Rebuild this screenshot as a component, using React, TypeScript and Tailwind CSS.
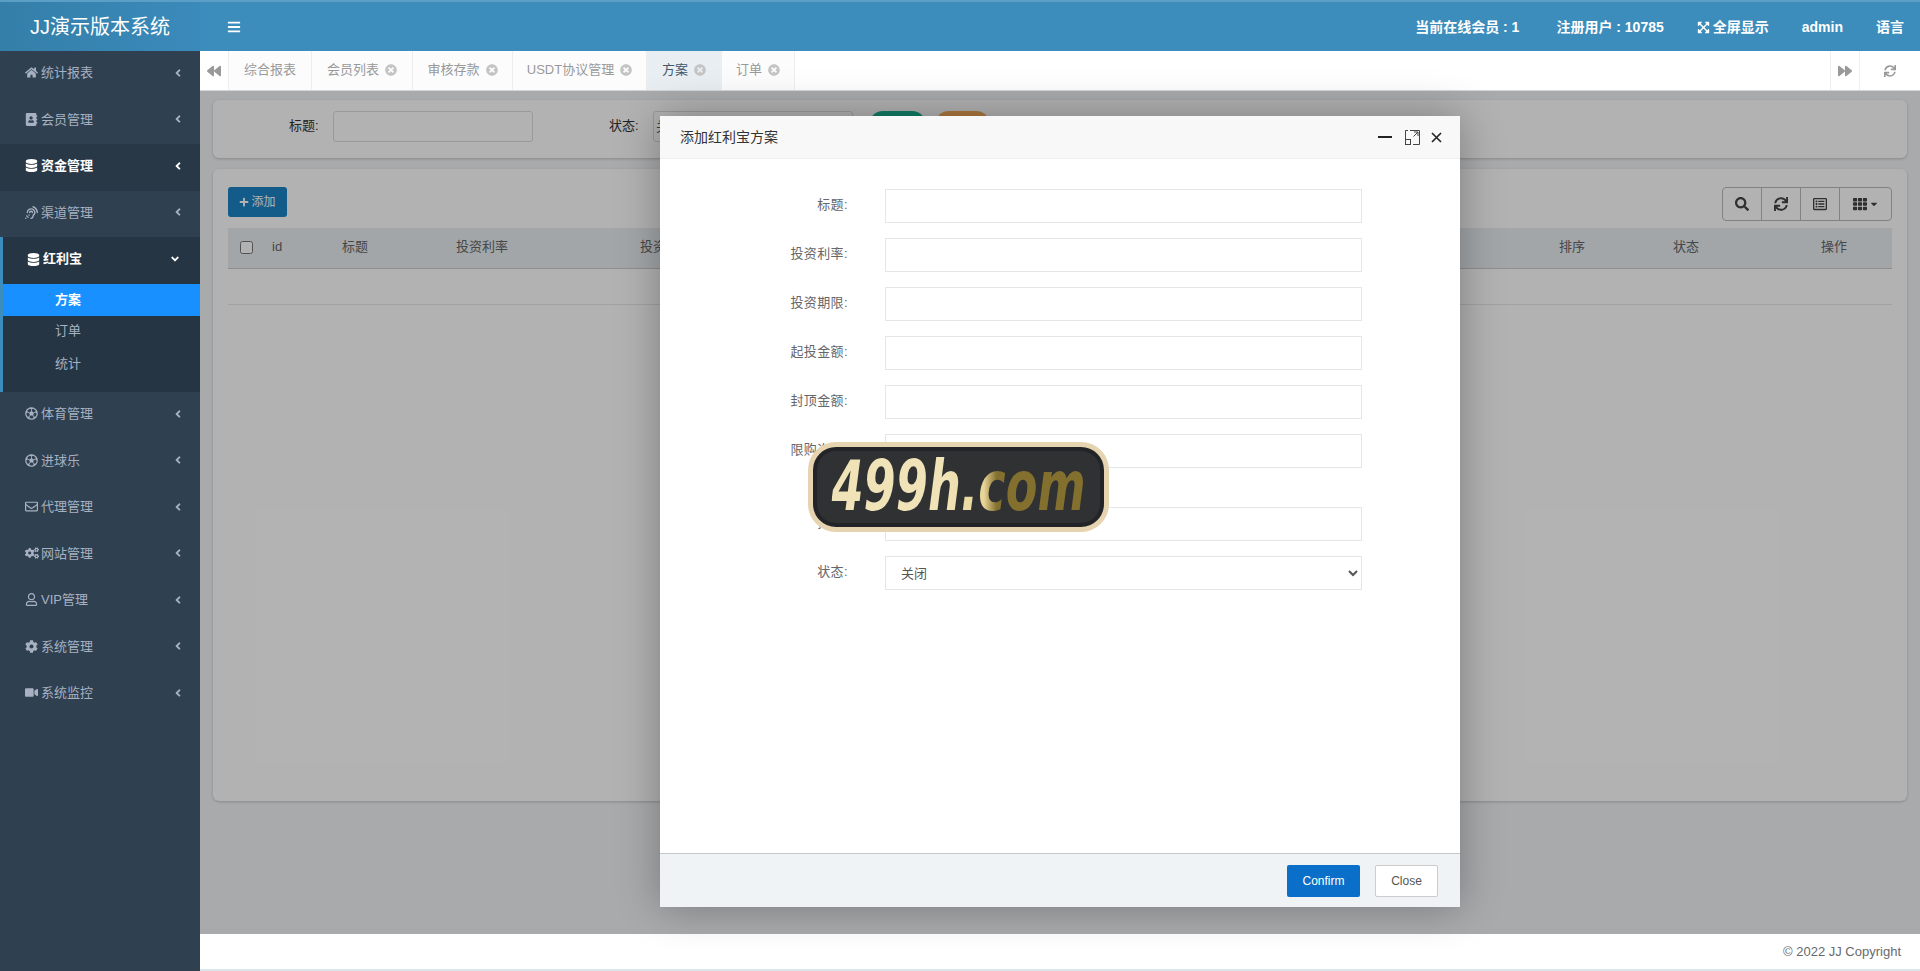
import React from 'react';
import {
  FaHome, FaAddressBook, FaDatabase, FaAssistiveListeningSystems, FaRegFutbol, FaRegEnvelope,
  FaCogs, FaRegUser, FaCog, FaVideo, FaBars, FaAngleLeft, FaAngleDown, FaBackward, FaForward, FaSync,
  FaTimesCircle, FaSearch, FaRegListAlt, FaTh, FaCaretDown, FaPlus, FaExpandArrowsAlt,
} from 'react-icons/fa';

const FONT = '[font-family:"Liberation_Sans","Noto_Sans_CJK_SC",sans-serif]';

type MenuItem = { label: string; icon: React.ReactNode; active?: boolean };

const topItems: MenuItem[] = [
  { label: '统计报表', icon: <FaHome size={13} /> },
  { label: '会员管理', icon: <FaAddressBook size={13} /> },
  { label: '资金管理', icon: <FaDatabase size={13} />, active: true },
  { label: '渠道管理', icon: <FaAssistiveListeningSystems size={13} /> },
];

const bottomItems: MenuItem[] = [
  { label: '体育管理', icon: <FaRegFutbol size={13} /> },
  { label: '进球乐', icon: <FaRegFutbol size={13} /> },
  { label: '代理管理', icon: <FaRegEnvelope size={13} /> },
  { label: '网站管理', icon: <FaCogs size={14} /> },
  { label: 'VIP管理', icon: <FaRegUser size={13} /> },
  { label: '系统管理', icon: <FaCog size={13} /> },
  { label: '系统监控', icon: <FaVideo size={13} /> },
];

const tabs = [
  { label: '综合报表', close: false, w: 'w-[83px]' },
  { label: '会员列表', close: true, w: 'w-[101px]' },
  { label: '审核存款', close: true, w: 'w-[100px]' },
  { label: 'USDT协议管理', close: true, w: 'w-[134px]' },
  { label: '方案', close: true, w: 'w-[75px]', active: true },
  { label: '订单', close: true, w: 'w-[73px]' },
];

function SideItem({ item }: { item: MenuItem }) {
  return (
    <div className={`flex h-[46.5px] items-center pb-[3px] pl-[25px] pr-[16px] text-[13px] ${item.active ? 'bg-[#293846] font-bold text-white' : 'text-[#a7b1c2]'}`}>
      <span className="flex w-[16px] shrink-0">{item.icon}</span>
      <span className="flex-1">{item.label}</span>
      <FaAngleLeft size={12} />
    </div>
  );
}

function Sidebar() {
  return (
    <aside className="flex w-[200px] shrink-0 flex-col bg-[#2f4050]">
      <div className="flex h-[51px] items-center justify-center border-t-2 border-[#5c9fc6] bg-gradient-to-r from-[#347fa9] to-[#3a8abb] text-[20px] text-white">
        JJ演示版本系统
      </div>
      {topItems.map((item) => <SideItem key={item.label} item={item} />)}
      <div className="h-[155px] border-l-[3px] border-[#3c8dbc] bg-[#263544]">
        <div className="flex h-[47px] items-center pb-[3px] pl-[24px] pr-[19px] text-[13px] font-bold text-white">
          <span className="flex w-[16px] shrink-0"><FaDatabase size={13} /></span>
          <span className="flex-1">红利宝</span>
          <FaAngleDown size={12} />
        </div>
        <div className="flex h-[32px] items-center bg-[#1890ff] pl-[52px] text-[13px] font-bold text-white">方案</div>
        <div className="flex h-[33px] items-center pb-[3px] pl-[52px] text-[13px] text-[#a7b1c2]">订单</div>
        <div className="flex h-[33px] items-center pb-[3px] pl-[52px] text-[13px] text-[#a7b1c2]">统计</div>
      </div>
      {bottomItems.map((item) => <SideItem key={item.label} item={item} />)}
    </aside>
  );
}

function TopBar() {
  return (
    <header className="flex h-[51px] items-center border-t-2 border-[#5c9fc6] bg-[#3c8dbc] pl-[27px] text-white">
      <FaBars size={14} />
      <div className="ml-auto flex items-center pt-[2px] text-[14px] font-bold">
        <span>当前在线会员 : 1</span>
        <span className="ml-[37px]">注册用户 : 10785</span>
        <span className="ml-[33px] flex items-center gap-[3px]"><FaExpandArrowsAlt size={13} />全屏显示</span>
        <span className="ml-[33px]">admin</span>
        <span className="ml-[33px] mr-[16px]">语言</span>
      </div>
    </header>
  );
}

function TabBar() {
  return (
    <div className="flex h-[40px] items-stretch border-b border-[#d6d6d6] bg-white text-[13px] text-[#999]">
      <div className="flex w-[29px] items-center justify-center border-r border-[#eee]"><FaBackward size={14} /></div>
      {tabs.map((t) => (
        <div key={t.label} className={`flex ${t.w} items-center justify-center gap-[6px] border-r border-[#eee] pb-[2px] ${t.active ? 'bg-[#e9eef3] text-[#44586b]' : 'bg-[#fcfcfc]'}`}>
          {t.label}
          {t.close && <FaTimesCircle size={12} className="text-[#c4c4c4]" />}
        </div>
      ))}
      <div className="ml-auto flex w-[30px] items-center justify-center border-x border-[#eee]"><FaForward size={14} /></div>
      <div className="flex w-[60px] items-center justify-center"><FaSync size={12} /></div>
    </div>
  );
}

function Page() {
  return (
    <div className="flex h-full flex-col gap-[11px] px-[13px] pt-[9px] text-[13px]">
      <div className="flex h-[58px] items-start rounded-[6px] bg-white pt-[11px] text-[#333] shadow-[0_1px_3px_rgba(0,0,0,0.2)]">
        <span className="ml-[76px] mt-[5px] w-[32px]">标题:</span>
        <input className="ml-[12px] h-[31px] w-[200px] rounded-[3px] border border-[#ddd] bg-white" />
        <span className="ml-[76px] mt-[5px] w-[32px]">状态:</span>
        <div className="ml-[12px] flex h-[31px] w-[200px] items-center rounded-[3px] border border-[#ddd] bg-white pl-[2px] text-[#555]">关</div>
        <div className="ml-[16px] h-[31px] w-[57px] rounded-[14px] bg-[#1ab394]" />
        <div className="ml-[9px] h-[31px] w-[55px] rounded-[14px] bg-[#f8ac59]" />
      </div>
      <div className="flex h-[632px] flex-col rounded-[6px] bg-white px-[15px] pt-[18px] shadow-[0_1px_3px_rgba(0,0,0,0.2)]">
        <div className="flex h-[34px] items-start justify-between">
          <button className="flex h-[30px] w-[59px] items-center justify-center gap-[2px] rounded-[3px] bg-[#1c84c6] text-[12px] text-white">
            <FaPlus size={10} />添加
          </button>
          <div className="flex h-[34px] w-[170px] rounded-[4px] border border-[#bbb] text-[#444]">
            <span className="flex w-[39px] items-center justify-center border-r border-[#bbb]"><FaSearch size={14} /></span>
            <span className="flex w-[39px] items-center justify-center border-r border-[#bbb]"><FaSync size={14} /></span>
            <span className="flex w-[39px] items-center justify-center border-r border-[#bbb]"><FaRegListAlt size={14} /></span>
            <span className="flex flex-1 items-center justify-center gap-[2px]"><FaTh size={14} /><FaCaretDown size={10} /></span>
          </div>
        </div>
        <div className="mt-[7px] flex h-[41px] items-center border-b border-[#ccc] bg-[#e9eef3] pb-[2px] text-[#666]">
          <input type="checkbox" className="ml-[12px] h-[13px] w-[13px]" />
          <span className="ml-[19px] w-[70px]">id</span>
          <span className="w-[114px]">标题</span>
          <span className="w-[184px]">投资利率</span>
          <span className="flex-1">投资期限</span>
          <span className="w-[114px]">排序</span>
          <span className="w-[148px]">状态</span>
          <span className="w-[71px]">操作</span>
        </div>
        <div className="h-[36px] border-b border-[#e7e7e7]" />
      </div>
    </div>
  );
}

function Field({ label, className = '' }: { label: string; className?: string }) {
  return (
    <div className={`flex h-[34px] items-center ${className}`}>
      <span className="w-[188px] pb-[3px] text-right text-[13px] tracking-[0.4px] text-[#666]">{label}:</span>
      <input className="ml-[37px] h-[34px] w-[477px] border border-[#e5e6e7] bg-white" />
    </div>
  );
}

function Modal() {
  return (
    <div className="absolute left-[460px] top-[25px] flex h-[791px] w-[800px] flex-col bg-white shadow-[0_0_40px_rgba(0,0,0,0.3)]">
      <div className="flex h-[43px] items-center border-b border-[#eee] bg-[#f8f8f8] pl-[20px] pr-[18px] text-[14px] text-[#333]">
        <span className="flex-1">添加红利宝方案</span>
        <svg width="14" height="14" viewBox="0 0 14 14" className="mr-[13px]"><path d="M0 7h14" stroke="#222" strokeWidth="2" /></svg>
        <svg width="15" height="15" viewBox="0 0 15 15" fill="none" stroke="#444" className="mr-[11px]">
          <path d="M5 .5h9.5V14.500H8M.5 9V.5H3M8.500 6.500 13 2M9 2h4v4" />
          <rect x=".5" y="9.500" width="5" height="5" />
        </svg>
        <svg width="11" height="11" viewBox="0 0 11 11"><path d="M1 1l9 9M10 1l-9 9" stroke="#222" strokeWidth="1.600" /></svg>
      </div>
      <div className="flex flex-1 flex-col gap-[15px] pt-[30px]">
        <Field label="标题" />
        <Field label="投资利率" />
        <Field label="投资期限" />
        <Field label="起投金额" />
        <Field label="封顶金额" />
        <Field label="限购次数" />
        <Field label="排序" className="mt-[24px]" />
        <div className="flex h-[34px] items-center">
          <span className="w-[188px] pb-[3px] text-right text-[13px] tracking-[0.4px] text-[#666]">状态:</span>
          <select className="ml-[37px] h-[34px] w-[477px] border border-[#e5e6e7] bg-white pl-[11px] text-[13px] text-[#555]">
            <option>关闭</option>
          </select>
        </div>
      </div>
      <div className="flex h-[54px] items-center justify-end gap-[15px] border-t border-[#c4c8cc] bg-[#eff3f6] pr-[22px] text-[12px]">
        <button className="h-[32px] w-[73px] rounded-[2px] bg-[#0a6fc9] text-white">Confirm</button>
        <button className="h-[32px] w-[63px] rounded-[2px] border border-[#ccc] bg-white text-[#555]">Close</button>
      </div>
    </div>
  );
}

function Watermark() {
  return (
    <div className="absolute left-[808px] top-[442px] flex h-[90px] w-[301px] items-center justify-center rounded-[28px] border-[5px] border-[#e6d3b0] bg-[#303133] shadow-[inset_0_0_0_4px_#232427]">
      <span className="origin-center scale-x-[0.66] whitespace-nowrap bg-gradient-to-r from-[#f1e3b8] from-45% via-[#e8d597] via-60% to-[#84702e] to-65% bg-clip-text pb-[2px] [font-family:'DejaVu_Sans',sans-serif] text-[70px] font-bold italic leading-none text-transparent">
        499h.com
      </span>
    </div>
  );
}

export default function App() {
  return (
    <div className={`relative flex h-[971px] w-full overflow-hidden ${FONT}`}>
      <Sidebar />
      <div className="flex min-w-0 flex-1 flex-col">
        <TopBar />
        <TabBar />
        <main className="relative flex-1 bg-[#f1f4f6]">
          <Page />
          <div className="absolute inset-0 bg-black/30" />
          <Modal />
        </main>
        <footer className="flex h-[37px] items-center justify-end border-b-2 border-[#dbe6ec] bg-white pr-[19px] text-[13px] text-[#676a6c]">
          © 2022 JJ Copyright
        </footer>
      </div>
      <Watermark />
    </div>
  );
}
